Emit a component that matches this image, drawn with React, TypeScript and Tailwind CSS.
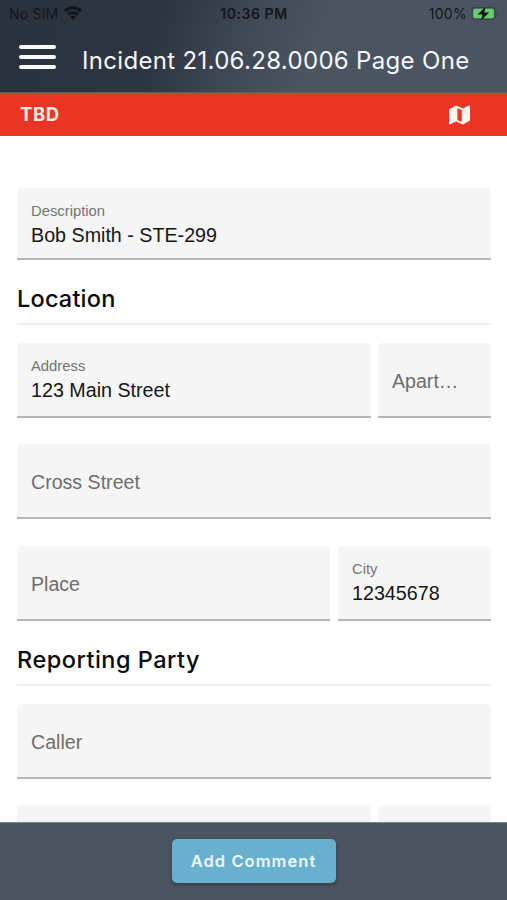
import type { ReactNode } from 'react';

type FieldProps = {
  label: string;
  value?: string;
  className?: string;
};

function Field({ label, value, className = 'h-[75px] w-full' }: FieldProps) {
  return (
    <div
      className={`flex shrink-0 flex-col rounded-t-[5px] border-b-2 border-[#b5b5b5] bg-[#f5f5f5] px-[14px] font-['Liberation_Sans',Arial,sans-serif] ${value ? 'pt-[13px]' : 'justify-center pt-[2px]'} ${className}`}
    >
      {value ? (
        <>
          <span className="text-[14.8px] leading-[20px] text-[#747474]">{label}</span>
          <span className="mt-[1px] text-[19.7px] leading-[26px] whitespace-nowrap text-[#161616]">{value}</span>
        </>
      ) : (
        <span className="text-[19.6px] leading-[26px] whitespace-nowrap text-[#6d6d6d]">{label}</span>
      )}
    </div>
  );
}

function SectionTitle({ children, className }: { children: ReactNode; className: string }) {
  return (
    <h2
      className={`flex h-[50px] items-center border-b-2 border-[#eeeeee] text-[23.5px] font-medium text-[#0a0a0a] ${className}`}
    >
      {children}
    </h2>
  );
}

function StatusBar() {
  return (
    <div className="grid h-[27px] grid-cols-3 items-center pr-[8px] pl-[9px] text-[14px] text-[#11161d]">
      <div className="flex items-center gap-[6px]">
        <span className="tracking-[0.2px]">No SIM</span>
        <svg width="18" height="14" viewBox="0 0 18 14" fill="none" stroke="#11161d" strokeWidth="2.9" className="mt-[-2px]">
          <path d="M1 5.1C5.5.6 12.5.6 17 5.1" />
          <path d="M4 8.6C6.8 5.9 11.2 5.9 14 8.6" />
          <path d="M9 13.8 6.1 10.7c1.6-1.5 4.2-1.5 5.8 0Z" fill="#11161d" stroke="none" />
        </svg>
      </div>
      <span className="text-center font-semibold tracking-[0.55px] whitespace-nowrap">10:36 PM</span>
      <div className="flex items-center justify-end gap-[4px]">
        <span className="tracking-[0.3px]">100%</span>
        <svg width="28" height="15" viewBox="0 0 29 16" className="mt-[-1px]">
          <rect x="0.7" y="1.7" width="24.6" height="12.6" rx="3.5" fill="none" stroke="#39434c" strokeWidth="1.1" />
          <rect x="2" y="3" width="22" height="10" rx="2" fill="#65ce6c" />
          <path d="M27 5.8c1.7.8 1.7 3.6 0 4.4Z" fill="#39434c" />
          <path d="M15 .8 6.5 9h5.2l-1.2 6.2L19 7h-5.2Z" fill="#10161b" />
        </svg>
      </div>
    </div>
  );
}

export default function App() {
  return (
    <div className="flex h-[900px] w-[507px] flex-col overflow-hidden bg-white font-['Inter',sans-serif]">
      <header className="h-[93px] shrink-0 border-b border-[#59616c] bg-[linear-gradient(110deg,#2a323e_0%,#2d3541_32%,#404955_48%,#4b5561_62%,#4b5561_100%)]">
        <StatusBar />
        <div className="flex h-[65px] items-center pl-[19px]">
          <button aria-label="Menu" className="mt-[-5px] flex w-[37px] flex-col gap-[6px]">
            <span className="h-[4px] rounded-full bg-[#f7faff]" />
            <span className="h-[4px] rounded-full bg-[#f7faff]" />
            <span className="h-[4px] rounded-full bg-[#f7faff]" />
          </button>
          <h1 className="ml-[26px] pt-[2px] text-[24px] tracking-[0.32px] whitespace-nowrap text-[#f3f7fd]">
            Incident 21.06.28.0006 Page One
          </h1>
        </div>
      </header>

      <div className="flex h-[43px] shrink-0 items-center justify-between bg-[#ea3525] pr-[37px] pl-[20px] text-white">
        <span className="pt-[1px] text-[18.5px] font-bold tracking-[0.6px] text-[#ffeae5]">TBD</span>
        <svg width="21" height="20" viewBox="0 0 21 20" className="mt-[1px]">
          <path
            fillRule="evenodd"
            d="M.8 3.9 7 .6 14 3.4 19.8.6q1.2-.4 1.2.8v13.4q0 .7-.7 1.1L14 19.4 7 16.4 1.2 19.3Q0 19.7 0 18.5V5.1q0-.8.8-1.2ZM8.4 3.2v11.7l4.4 1.9V5Z"
            fill="#fff5ed"
          />
        </svg>
      </div>

      <main className="min-h-0 flex-1 overflow-hidden pt-[52px] pr-4 pl-[17px]">
        <Field label="Description" value="Bob Smith - STE-299" className="h-[72px] w-full" />
        <SectionTitle className="mt-[15px] tracking-[0.2px]">Location</SectionTitle>
        <div className="mt-[18px] flex gap-[7px]">
          <Field label="Address" value="123 Main Street" className="h-[75px] w-[354px]" />
          <Field label="Apart…" className="h-[75px] w-[113px]" />
        </div>
        <div className="mt-[26px] flex flex-col gap-[27px]">
          <Field label="Cross Street" />
          <div className="flex gap-[8px]">
            <Field label="Place" className="h-[75px] w-[313px]" />
            <Field label="City" value="12345678" className="h-[75px] w-[153px]" />
          </div>
        </div>
        <SectionTitle className="mt-[15px] tracking-[0.5px]">Reporting Party</SectionTitle>
        <div className="mt-[18px] flex flex-col gap-[26px]">
          <Field label="Caller" />
          <div className="flex gap-[7px]">
            <div className="h-[75px] w-[354px] rounded-t-[5px] bg-[#f5f5f5]" />
            <div className="h-[75px] w-[113px] rounded-t-[5px] bg-[#f5f5f5]" />
          </div>
        </div>
      </main>

      <footer className="flex h-[78px] shrink-0 items-start justify-center border-t border-[#7b858e] bg-[#4b5561] pt-[16px]">
        <button className="h-[44px] w-[164px] rounded-[5px] bg-[#69b0cf] text-[16.5px] font-semibold tracking-[1.05px] text-[#e9f8ff] shadow-[0_2px_4px_rgba(0,0,0,0.3)]">
          Add Comment
        </button>
      </footer>
    </div>
  );
}
